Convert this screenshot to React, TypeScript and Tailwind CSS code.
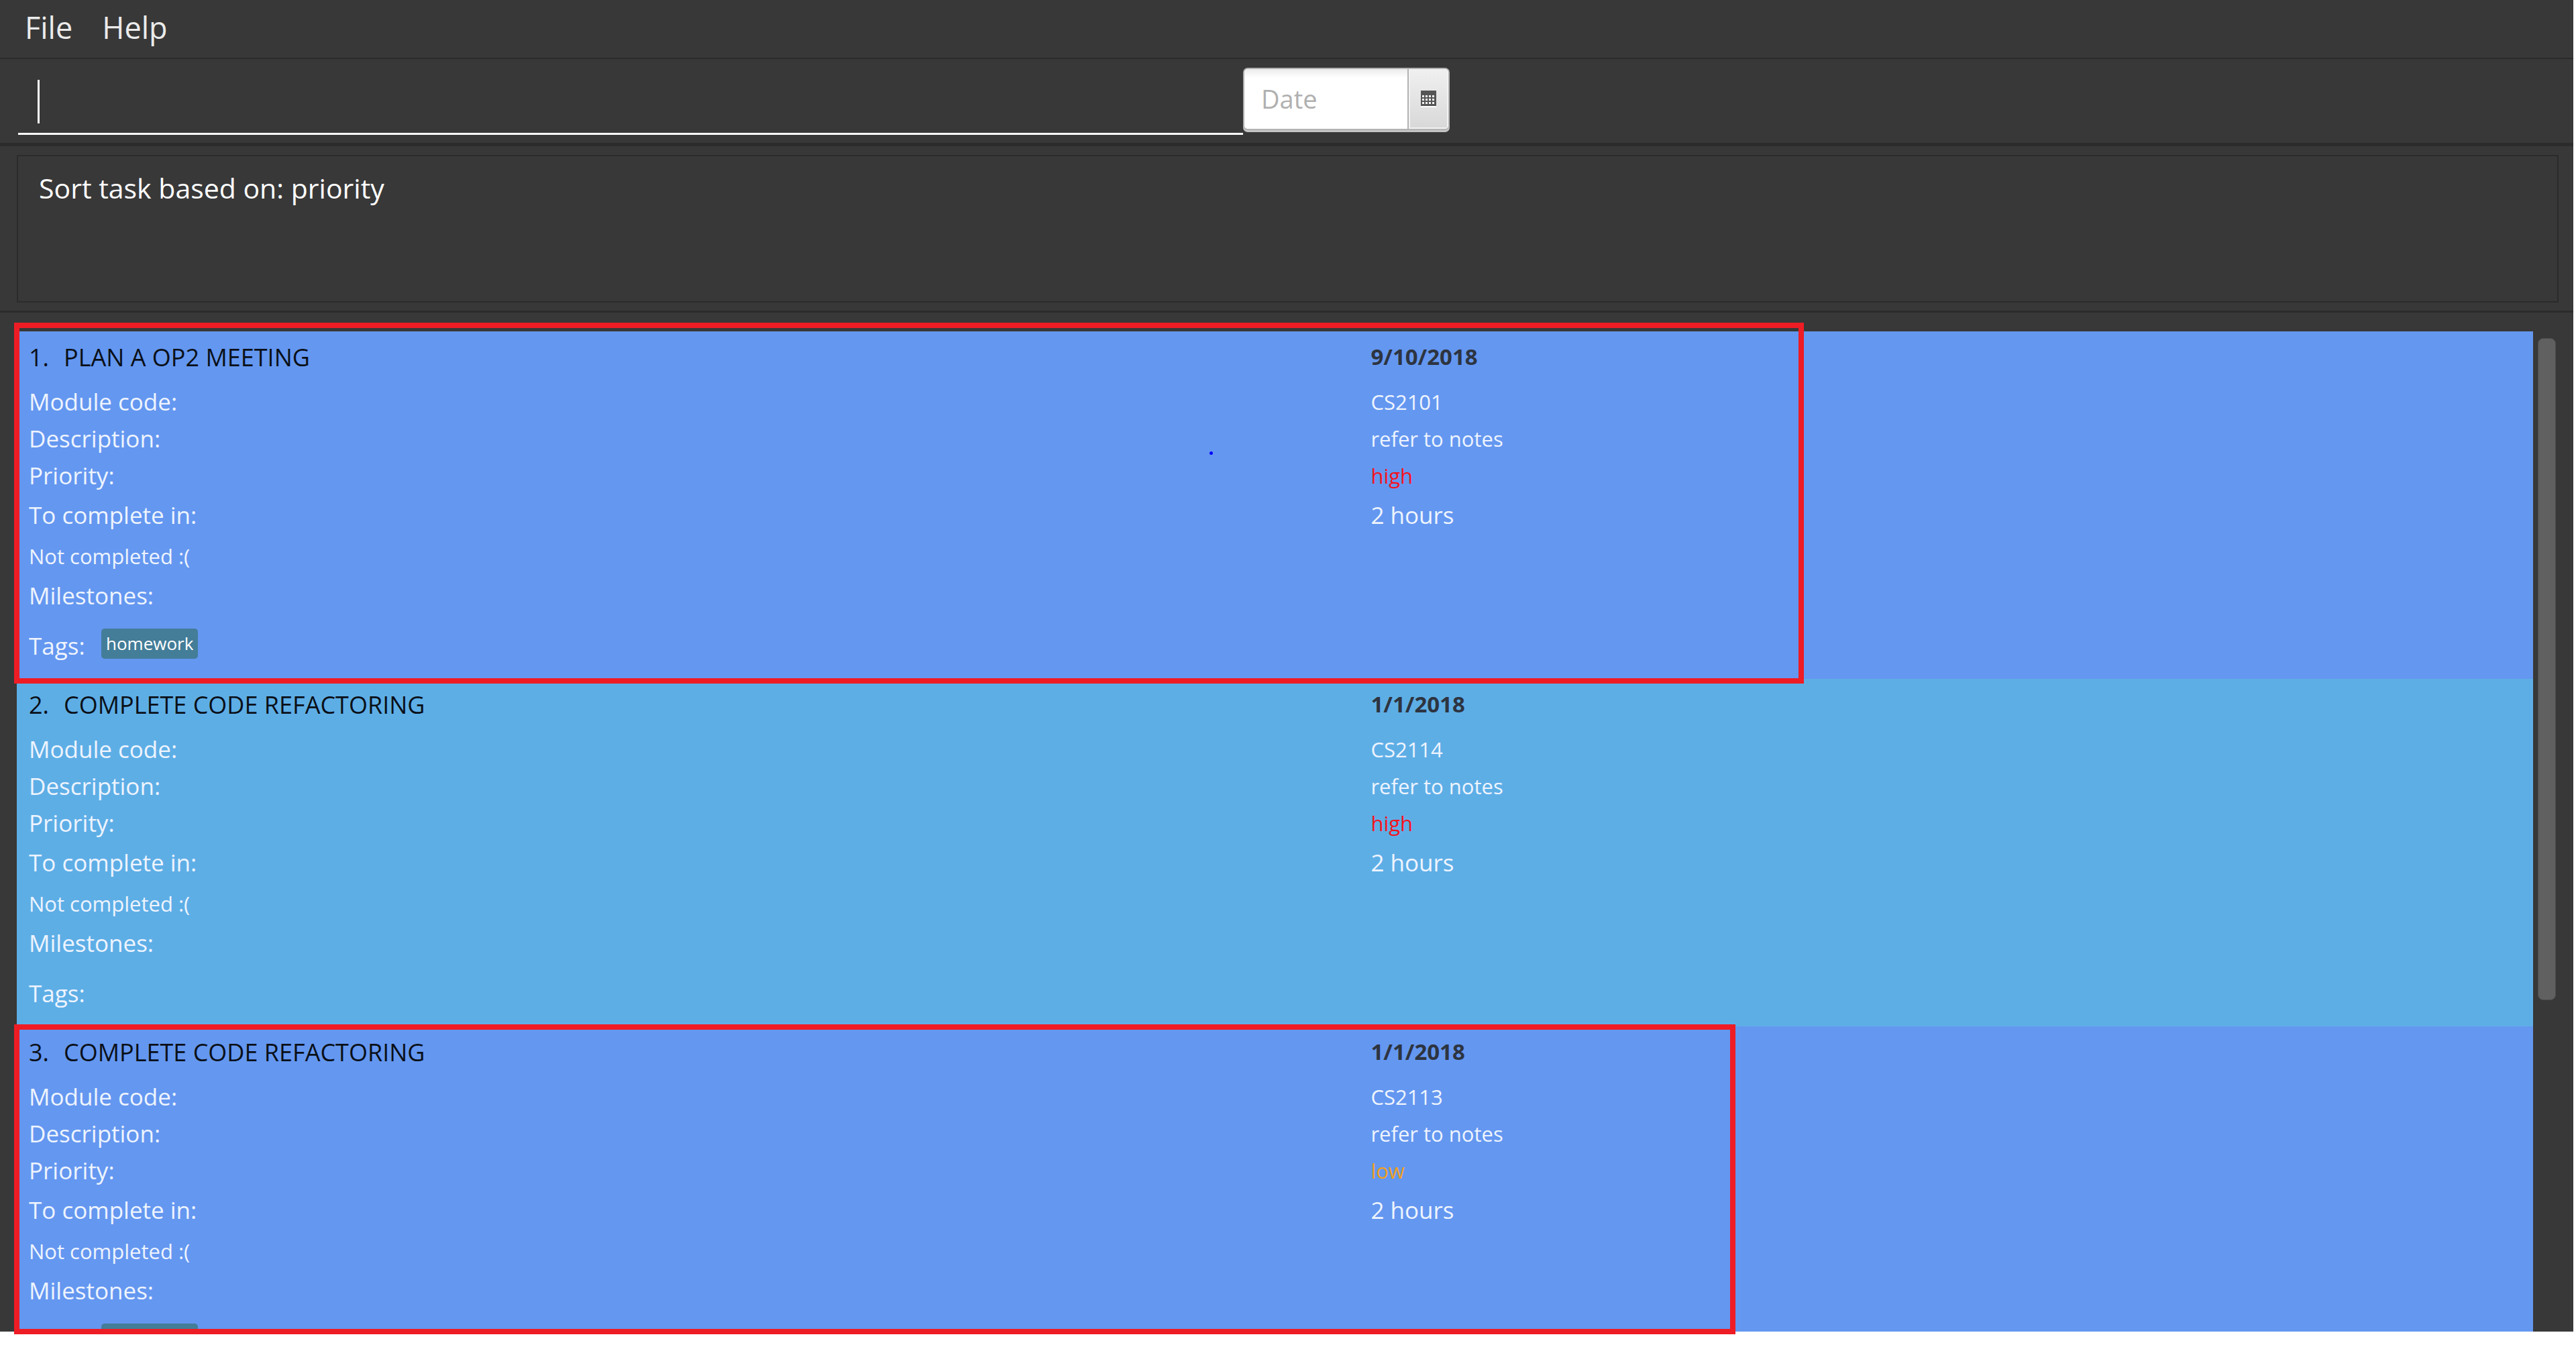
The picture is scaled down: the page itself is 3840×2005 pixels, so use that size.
import React from 'react';

type Priority = 'high' | 'low';

interface Task {
  id: number;
  name: string;
  date: string;
  moduleCode: string;
  description: string;
  priority: Priority;
  hours: string;
  tags: string[];
}

const tasks: Task[] = [
  { id: 1, name: 'PLAN A OP2 MEETING', date: '9/10/2018', moduleCode: 'CS2101', description: 'refer to notes', priority: 'high', hours: '2 hours', tags: ['homework'] },
  { id: 2, name: 'COMPLETE CODE REFACTORING', date: '1/1/2018', moduleCode: 'CS2114', description: 'refer to notes', priority: 'high', hours: '2 hours', tags: [] },
  { id: 3, name: 'COMPLETE CODE REFACTORING', date: '1/1/2018', moduleCode: 'CS2113', description: 'refer to notes', priority: 'low', hours: '2 hours', tags: ['homework'] },
];

const priorityColor: Record<Priority, string> = {
  high: 'text-[#f5121c]',
  low: 'text-[#f0a01e]',
};

function MenuBar() {
  return (
    <nav className="flex h-[88px] shrink-0 items-center gap-[44px] border-b-2 border-[#2b2b2b] pb-1 pl-[37px] text-[45px] leading-[60px] text-[#ebebeb]">
      <button type="button">File</button>
      <button type="button">Help</button>
    </nav>
  );
}

function CalendarIcon() {
  const columns = [2, 7, 12, 17];
  const rows = [7, 12, 17];
  return (
    <svg width="23" height="25" viewBox="0 0 23 25" shapeRendering="crispEdges" aria-hidden="true">
      <rect y="2" width="23" height="23" fill="#ffffff" />
      <rect width="23" height="23" fill="#555555" />
      {rows.map((y) => columns.map((x) => <rect key={`${x}-${y}`} x={x} y={y} width="3" height="3" fill="#f4f4f4" />))}
    </svg>
  );
}

function CommandBar() {
  return (
    <div className="flex h-[130px] shrink-0 items-start border-b-[5px] border-[#2b2b2b] pl-[27px] pt-[13px]">
      <div className="relative w-[1826px]">
        <input
          type="text"
          aria-label="Command"
          className="block h-[100px] w-full border-b-[3px] border-white bg-transparent px-[30px] text-[41px] text-white outline-none"
        />
        <span className="absolute left-[29px] top-[18px] h-[65px] w-[3px] bg-white" />
      </div>
      <div className="flex h-[93px] w-[308px] overflow-hidden rounded-[7px] border-2 border-[#b2b2b2] bg-white shadow-[0_3px_0_#c4c4c4]">
        <input
          type="text"
          aria-label="Date"
          placeholder="Date"
          className="min-w-0 flex-1 bg-linear-to-b from-[#ececec] to-white to-15% pl-[25px] text-[38px] text-[#333333] outline-none placeholder:text-[#b0b0b0]"
        />
        <button
          type="button"
          aria-label="Open calendar"
          className="flex w-[61px] items-center justify-center border-l-2 border-[#b2b2b2] bg-linear-to-b from-[#f0f0f0] to-[#d8d8d8] shadow-[inset_0_0_0_2px_#f2f2f2]"
        >
          <CalendarIcon />
        </button>
      </div>
    </div>
  );
}

function ResultDisplay() {
  return (
    <section className="h-[248px] shrink-0 border-b-[3px] border-[#2b2b2b] pb-[12px] pl-[25px] pr-[22px] pt-[13px]">
      <div className="h-full border-2 border-[#2b2b2b] pl-[31px] pt-[19px] text-[41px] leading-[56px] text-white">
        Sort task based on: priority
      </div>
    </section>
  );
}

const row = 'grid grid-cols-[7fr_6fr] items-center';

function TaskCard({ task }: { task: Task }) {
  return (
    <li className="h-[518px] px-[18px] pb-[3px] pt-[11px] text-[35px] text-[#eef4fe] odd:bg-[#6497f0] even:bg-[#5eaee6]">
      <div className={`${row} h-[56px]`}>
        <h2 className="flex text-[36px] text-[#0a1018]">
          <span className="w-[52px]">{task.id}.</span>
          {task.name}
        </h2>
        <time className="pb-[2px] text-[33px] font-bold text-[#2d3440]">{task.date}</time>
      </div>
      <dl className="mt-[11px]">
        <div className={`${row} h-[55px]`}>
          <dt>Module code:</dt>
          <dd className="text-[31px]">{task.moduleCode}</dd>
        </div>
        <div className={`${row} h-[55px]`}>
          <dt>Description:</dt>
          <dd className="text-[31px]">{task.description}</dd>
        </div>
        <div className={`${row} h-[55px]`}>
          <dt>Priority:</dt>
          <dd className={`text-[31px] ${priorityColor[task.priority]}`}>{task.priority}</dd>
        </div>
        <div className={`${row} h-[63px]`}>
          <dt>To complete in:</dt>
          <dd>{task.hours}</dd>
        </div>
      </dl>
      <p className="flex h-[59px] items-center text-[31px]">Not completed :(</p>
      <p className="flex h-[58px] items-center">Milestones:</p>
      <div className="flex h-[92px] items-center">
        <span className="w-[108px]">Tags:</span>
        {task.tags.map((tag) => (
          <span key={tag} className="mb-[7px] flex h-[45px] items-center rounded-[5px] bg-[#437d98] px-[7px] text-[26px] text-white">
            {tag}
          </span>
        ))}
      </div>
    </li>
  );
}

function TaskList() {
  return (
    <div className="flex min-h-0 flex-1 pl-[25px] pt-[28px]">
      <div className="relative min-w-0 flex-1">
        <ul className="h-full overflow-hidden">
          {tasks.map((task) => (
            <TaskCard key={task.id} task={task} />
          ))}
        </ul>
        <div className="absolute -left-[4px] -top-[13px] right-[1087px] h-[538px] border-8 border-[#ee1c24]" />
        <div className="absolute -bottom-[4px] -left-[4px] right-[1189px] h-[462px] border-8 border-[#ee1c24]" />
        <span className="absolute left-[1778px] top-[179px] size-[5px] rounded-full bg-[#0000ff]" />
      </div>
      <div className="w-[60px] pl-[7px] pt-[10px]">
        <div className="h-2/3 w-[27px] rounded-[8px] border border-[#4c4c4c] bg-[#606060]" />
      </div>
    </div>
  );
}

export default function App() {
  return (
    <div className="flex h-screen bg-white pb-[20px] pr-[4px] font-['Open_Sans','Noto_Sans',sans-serif]">
      <main className="flex min-w-0 flex-1 flex-col bg-[#383838]">
        <MenuBar />
        <CommandBar />
        <ResultDisplay />
        <TaskList />
      </main>
    </div>
  );
}
